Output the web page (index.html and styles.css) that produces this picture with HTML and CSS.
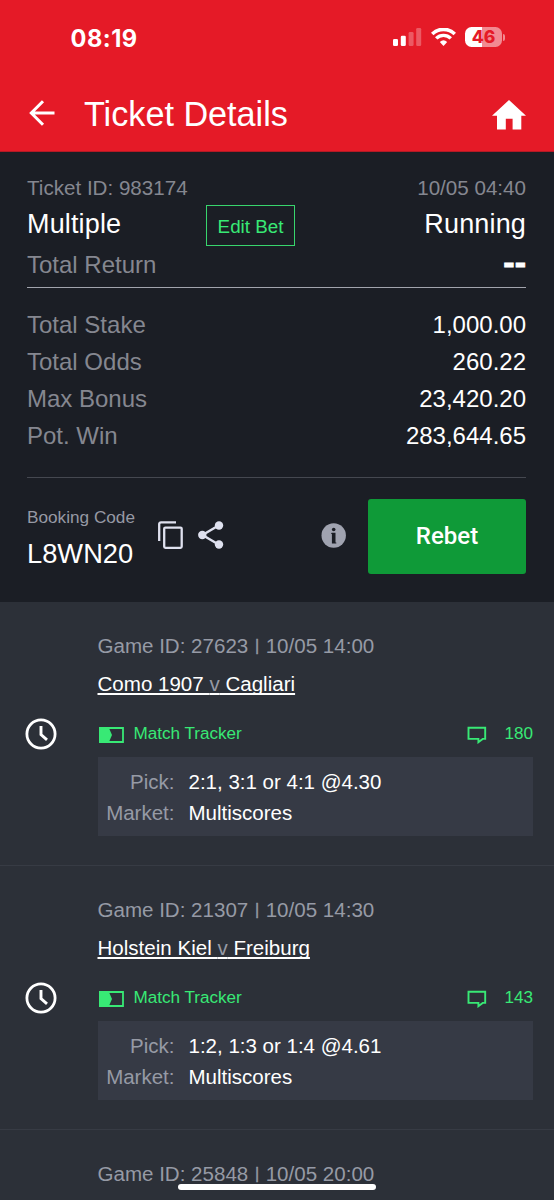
FILE: index.html
```html
<!DOCTYPE html>
<html lang="en">
<head>
<meta charset="utf-8">
<title>Ticket Details</title>
<link rel="stylesheet" href="styles.css">
</head>
<body>
<svg class="defs" width="0" height="0" aria-hidden="true">
  <symbol id="clock" viewBox="0 0 32 32"><circle cx="16" cy="16" r="14.1" fill="none" stroke="currentColor" stroke-width="2.8"/><path d="M16 8v8.6l6 5.2" fill="none" stroke="currentColor" stroke-width="2.9"/></symbol>
  <symbol id="tracker" viewBox="0 0 25 16"><path d="M1 1h23v14H1z" fill="none" stroke="currentColor" stroke-width="1.8"/><path d="M0 0h9.5l3.5 8-3.5 8H0z" fill="currentColor"/></symbol>
  <symbol id="chat" viewBox="0 0 20 18"><path d="M1.5 1.7h16.7v11.2h-2.5l-4.3 3.3v-3.3H1.5z" fill="none" stroke="currentColor" stroke-width="1.9"/></symbol>
</svg>
<div class="app">
  <header class="top">
    <div class="status">
      <span class="time">08:19</span>
      <svg class="signal" width="29" height="19" viewBox="0 0 29 19" fill="#fff"><rect y="11" width="5" height="7" rx="1.3"/><rect x="7.8" y="7.8" width="5" height="10.2" rx="1.3"/><rect x="15.6" y="4" width="5" height="14" rx="1.3" opacity=".28"/><rect x="23.2" y="0" width="5" height="18" rx="1.3" opacity=".28"/></svg>
      <svg class="wifi" width="25" height="18" viewBox="0 0 25 18" fill="none" stroke="#fff"><path d="M1.2 6a16 16 0 0 1 22.6 0" stroke-width="3.6"/><path d="M5.2 10.4a10.4 10.4 0 0 1 14.6 0" stroke-width="3.4"/><path d="M8.8 14a5.6 5.6 0 0 1 7.4 0L12.5 18z" fill="#fff" stroke="none"/></svg>
      <span class="battery">46</span><i class="cap"></i>
    </div>
    <div class="nav">
      <svg class="back" width="26" height="26" viewBox="0 0 26 26" fill="none" stroke="#fff" stroke-width="3"><path d="M25.5 13H2.5M14 1.3L2.3 13 14 24.7"/></svg>
      <h1>Ticket Details</h1>
      <svg class="home" width="34" height="30" viewBox="0 0 34 30"><path d="M17 0l17 15.7h-4.7V29.5H20.6V18.7h-6.8v10.8H5V15.7H0z" fill="#fff"/></svg>
    </div>
  </header>

  <section class="summary">
    <div class="row meta"><span>Ticket ID: 983174</span><span>10/05 04:40</span></div>
    <div class="row kind"><span>Multiple</span><button class="edit">Edit Bet</button><span>Running</span></div>
    <div class="row return"><span>Total Return</span><b>--</b></div>
    <div class="totals">
      <div class="row"><span>Total Stake</span><span class="val">1,000.00</span></div>
      <div class="row"><span>Total Odds</span><span class="val">260.22</span></div>
      <div class="row"><span>Max Bonus</span><span class="val">23,420.20</span></div>
      <div class="row"><span>Pot. Win</span><span class="val">283,644.65</span></div>
    </div>
    <div class="booking">
      <div class="code"><small>Booking Code</small><span>L8WN20</span></div>
      <svg class="copy" width="25" height="28" viewBox="0 0 25 28" fill="none" stroke="#dfe1ef" stroke-width="2.3"><path d="M18 1.3H3a1.8 1.8 0 0 0-1.8 1.8V20"/><rect x="6.2" y="6.6" width="17.5" height="20.2" rx="1.2"/></svg>
      <svg class="share" width="26" height="28" viewBox="0 0 26 28" fill="#dfe1ef"><path d="M21 4.3L4.5 14 21 23.7" fill="none" stroke="#dfe1ef" stroke-width="2.4"/><circle cx="21" cy="4.5" r="4.2"/><circle cx="4.3" cy="14" r="4.2"/><circle cx="21" cy="23.5" r="4.2"/></svg>
      <svg class="info" width="25" height="25" viewBox="0 0 25 25"><circle cx="12.7" cy="12.5" r="12.2" fill="#a0a3b0"/><circle cx="12.7" cy="6.5" r="1.8" fill="#1b1e25"/><path d="M10.6 9.7h3.9v9.8h.8v1h-4.4v-9.6h-.9z" fill="#1b1e25"/></svg>
      <button class="rebet">Rebet</button>
    </div>
  </section>

  <main class="games">
    <article class="game">
      <svg class="clock"><use href="#clock"/></svg>
      <div class="body">
        <p class="id">Game ID: 27623 <i class="bar">|</i> 10/05 14:00</p>
        <a class="teams">Como 1907 <span>v</span> Cagliari</a>
        <div class="links"><svg class="tracker"><use href="#tracker"/></svg><span>Match Tracker</span><svg class="chat"><use href="#chat"/></svg><span class="count">180</span></div>
        <dl><dt>Pick:</dt><dd>2:1, 3:1 or 4:1 @4.30</dd><dt>Market:</dt><dd>Multiscores</dd></dl>
      </div>
    </article>
    <article class="game">
      <svg class="clock"><use href="#clock"/></svg>
      <div class="body">
        <p class="id">Game ID: 21307 <i class="bar">|</i> 10/05 14:30</p>
        <a class="teams">Holstein Kiel <span>v</span> Freiburg</a>
        <div class="links"><svg class="tracker"><use href="#tracker"/></svg><span>Match Tracker</span><svg class="chat"><use href="#chat"/></svg><span class="count">143</span></div>
        <dl><dt>Pick:</dt><dd>1:2, 1:3 or 1:4 @4.61</dd><dt>Market:</dt><dd>Multiscores</dd></dl>
      </div>
    </article>
    <article class="game">
      <div class="body">
        <p class="id">Game ID: 25848 <i class="bar">|</i> 10/05 20:00</p>
      </div>
    </article>
  </main>
  <div class="home-indicator"></div>
</div>
</body>
</html>
```

FILE: styles.css
```css
* { box-sizing: border-box; margin: 0; padding: 0; }
body { background: #2c3038; font-family: "Liberation Sans", Arial, sans-serif; color: #fff; }
svg { display: block; flex: none; }
button { font-family: inherit; background: none; border: 0; color: inherit; }
.defs { position: absolute; }
.app { position: relative; width: 554px; height: 1200px; overflow: hidden; background: #2c3038; }

.top { height: 152px; background: #e51a27; border-bottom: 1px solid #b31a25; }
.status { display: flex; align-items: center; height: 76px; padding: 0 49px 0 70.5px; }
.time { font: 700 23.6px/30px Inter, sans-serif; letter-spacing: .5px; margin: 1px auto 0 0; }
.signal { margin-top: -1px; }
.wifi { margin: -2px 9px 0 9px; }
.battery { width: 37px; height: 20px; margin-top: -2px; border-radius: 6.5px; background: linear-gradient(90deg, #fff 47%, #f28a91 47%); color: #e51a27; font: 800 17.5px/20px Inter, sans-serif; text-align: center; }
.cap { width: 2px; height: 7px; margin: -2px 0 0 1px; border-radius: 0 2px 2px 0; background: #f28a91; }
.nav { display: flex; align-items: center; height: 76px; padding: 0 28px 0 29px; }
.back { margin-top: -2px; }
.nav h1 { font-size: 34.2px; font-weight: 400; line-height: 40px; margin: 0 auto 0 29px; }
.home { margin-top: 1px; }

.summary { height: 450px; padding: 0 28px 0 27px; background: #1b1e25; }
.row { display: flex; justify-content: space-between; align-items: center; }
.meta { height: 53px; padding-top: 19px; font-size: 20.6px; color: #858790; }
.meta span { line-height: 24px; }
.kind { height: 41px; font-size: 27px; display: grid; grid-template-columns: 179px 89px 1fr; align-items: start; }
.kind span { line-height: 39px; letter-spacing: .15px; }
.kind span:last-child { text-align: right; }
.edit { height: 41px; border: 1px solid #38d56d; color: #38e975; font-size: 18.8px; line-height: 41px; }
.return { height: 42px; font-size: 24px; color: #858790; border-bottom: 1px solid #a2a4ad; }
.return span { line-height: 36px; margin-bottom: 4px; }
.return b { color: #fff; font-size: 34px; line-height: 36px; margin-bottom: 10px; -webkit-text-stroke: .8px #fff; }
.totals { height: 190px; padding-top: 18px; border-bottom: 1px solid #454850; font-size: 24px; color: #858790; }
.totals .row { height: 37.25px; }
.val { color: #fff; }
.booking { display: flex; align-items: center; padding-top: 21px; }
.code { width: 131px; line-height: 36px; font-size: 27.3px; }
.code small { display: block; font-size: 17.2px; line-height: 32px; color: #9699a4; margin-top: 0; }
.code span { display: block; margin-top: 3px; }
.copy, .share { position: relative; top: -1.5px; }
.share { margin-left: 15px; }
.info { margin: -2px 22px 0 auto; }
.rebet { width: 158px; height: 75px; border-radius: 3px; background: #0f9a38; font: 500 24px/75px Roboto, sans-serif; }

.game { position: relative; display: flex; height: 264px; border-bottom: 1px solid #373b44; padding: 31px 21px 0 25px; }
.clock { width: 32px; height: 32px; margin: 85px 40.5px 0 0; color: #fff; }
.body { flex: 1; }
.game:last-child .body { margin-left: 72.5px; }
.id { font-size: 20.55px; line-height: 26px; color: #969aa5; white-space: nowrap; }
.bar { display: inline-block; width: 6px; text-align: center; font-style: normal; font-size: 16px; line-height: 16px; vertical-align: 2px; -webkit-text-stroke: .4px #969aa5; }
.teams { display: block; font-size: 20.55px; line-height: 26px; margin-top: 12px; text-decoration: underline; text-decoration-thickness: 1.5px; text-underline-offset: 2px; text-decoration-skip-ink: none; }
.teams span { color: #969aa5; }
.links { display: flex; align-items: center; height: 26px; margin-top: 24px; color: #38e975; font-size: 17.1px; }
.tracker { width: 25px; height: 16px; margin: 1px 10px 0 1px; }
.chat { width: 20px; height: 18px; margin: 1px 17px 0 auto; }
dl { display: grid; grid-template-columns: 77px 1fr; column-gap: 14px; height: 79px; margin-top: 10px; padding-top: 9px; align-content: start; background: #363a45; font-size: 20.5px; line-height: 31px; }
dt { text-align: right; color: #969aa5; }
.home-indicator { position: absolute; left: 178px; top: 1184px; width: 198px; height: 6px; border-radius: 3px; background: #fff; }
```
